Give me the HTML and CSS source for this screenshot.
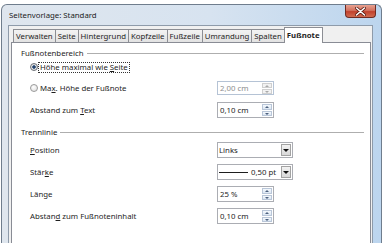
FILE: index.html
```html
<!DOCTYPE html>
<html lang="de">

<head>
    <meta charset="UTF-8">
    <link rel="stylesheet" href="styles.css">
    <title>Seitenvorlage: Standard</title>
</head>

<body>
    <!-- Dialogfenster -->
    <div class="window">
        <div class="titlebar">
            <span class="title">Seitenvorlage: Standard</span>
            <span class="close">
                <svg width="11" height="9" viewBox="0 0 11 9">
                    <path d="M1.5 1 L9.5 8 M9.5 1 L1.5 8" stroke="#5a1a12" stroke-width="3" stroke-linecap="round"/>
                    <path d="M1.5 1 L9.5 8 M9.5 1 L1.5 8" stroke="#fff" stroke-width="1.6" stroke-linecap="round"/>
                </svg>
            </span>
        </div>

        <div class="client">
            <!-- Registerkarten -->
            <div class="tabs">
                <span class="tab">Verwalten</span>
                <span class="tab">Seite</span>
                <span class="tab">Hintergrund</span>
                <span class="tab">Kopfzeile</span>
                <span class="tab">Fußzeile</span>
                <span class="tab">Umrandung</span>
                <span class="tab">Spalten</span>
                <span class="tab active">Fußnote</span>
            </div>

            <div class="panel">
                <div class="group-head"><span>Fußnotenbereich</span></div>

                <div class="row radio-row">
                    <span class="choice"><span class="radio checked"></span><span class="focus">Höhe maximal wie <u>S</u>eite</span></span>
                </div>

                <div class="row radio-row second">
                    <span class="choice"><span class="radio"></span><span class="text">Ma<u>x</u>. Höhe der Fußnote</span></span>
                    <span class="spin disabled">
                        <span>2,00 cm</span>
                        <span class="spin-btn"><i class="up"></i><i class="down"></i></span>
                    </span>
                </div>

                <div class="row">
                    <span>Abstand zum <u>T</u>ext</span>
                    <span class="spin">
                        <span>0,10 cm</span>
                        <span class="spin-btn"><i class="up"></i><i class="down"></i></span>
                    </span>
                </div>

                <div class="group-head second-head"><span>Trennlinie</span></div>

                <div class="row">
                    <span><u>P</u>osition</span>
                    <span class="drop">
                        <span class="drop-text">Links</span>
                        <span class="drop-btn"><i></i></span>
                    </span>
                </div>

                <div class="row">
                    <span>Stär<u>k</u>e</span>
                    <span class="drop">
                        <span class="drop-text line-value"><b class="line"></b>0,50 pt</span>
                        <span class="drop-btn"><i></i></span>
                    </span>
                </div>

                <div class="row">
                    <span>Länge</span>
                    <span class="spin">
                        <span>25 %</span>
                        <span class="spin-btn"><i class="up"></i><i class="down"></i></span>
                    </span>
                </div>

                <div class="row">
                    <span>Abstan<u>d</u> zum Fußnoteninhalt</span>
                    <span class="spin">
                        <span>0,10 cm</span>
                        <span class="spin-btn"><i class="up"></i><i class="down"></i></span>
                    </span>
                </div>
            </div>
        </div>
    </div>
</body>

</html>
```

FILE: styles.css
```css
/* Grundlayout */
body {
    margin: 0;
    background: #fff;
    font-family: "Noto Sans", "DejaVu Sans", sans-serif;
    font-size: 7.8px;
    color: #1e1e1e;
    overflow: hidden;
}

u {
    text-decoration: underline;
    text-underline-offset: 1px;
}

/* Fensterrahmen */
.window {
    margin: 4px 0 0 1px;
    width: 381px;
    height: 250px;
    box-sizing: border-box;
    border: 1px solid #6f7d8d;
    border-bottom: none;
    border-radius: 6px 6px 0 0;
    background: linear-gradient(90deg, #dfe6ee 0%, #d7e3f0 55%, #bcd5ee 100%);
    padding: 0 8px 0 6px;
    display: flex;
    flex-direction: column;
}

.titlebar {
    height: 20px;
    display: flex;
    justify-content: space-between;
    align-items: center;
}

.title {
    padding-left: 1px;
    color: #1b1b1b;
}

.close {
    align-self: flex-start;
    width: 31px;
    height: 13px;
    margin-right: -3px;
    box-sizing: border-box;
    border: 1px solid #6e2a22;
    border-top: none;
    border-radius: 0 0 4px 4px;
    background: linear-gradient(#e7a190 0%, #d2715f 45%, #c1412d 55%, #d06a4f 100%);
    display: flex;
    justify-content: center;
    align-items: center;
}

/* Innenbereich */
.client {
    flex: 1;
    background: #f0f0f0;
    border: 1px solid #8e9baa;
    border-bottom: none;
    padding: 1px 1px 0 2px;
    display: flex;
    flex-direction: column;
}

/* Registerkarten */
.tabs {
    display: flex;
    align-items: flex-end;
    height: 15px;
    margin-left: 2px;
}

.tab {
    height: 13px;
    box-sizing: border-box;
    padding: 0 2px;
    border: 1px solid #8c8e94;
    border-bottom: none;
    margin-left: -1px;
    background: linear-gradient(#f3f3f3, #e2e2e2);
    line-height: 12px;
    white-space: nowrap;
}

.tab:first-child {
    margin-left: 0;
}

.tab.active {
    height: 16px;
    margin-bottom: -1px;
    background: #fff;
    font-weight: bold;
    position: relative;
    z-index: 1;
    line-height: 14px;
}

.panel {
    flex: 1;
    background: #fff;
    border: 1px solid #898c95;
    border-bottom: none;
    padding: 3px 6px 0 9px;
}

/* Gruppenüberschrift mit Linie */
.group-head {
    display: flex;
    align-items: center;
    gap: 3px;
    height: 14px;
}

.group-head::after {
    content: "";
    flex: 1;
    height: 1px;
    background: #aeaeae;
}

.second-head {
    margin-top: 4px;
}

/* Zeilen */
.row {
    display: grid;
    grid-template-columns: 187px auto;
    align-items: center;
    height: 22px;
    padding-left: 9px;
}

.radio-row {
    height: 14px;
}

.radio-row.second {
    height: 22px;
    margin-top: 3px;
}

.choice {
    display: flex;
    align-items: center;
}

.radio {
    width: 8px;
    height: 8px;
    box-sizing: border-box;
    border-radius: 50%;
    border: 1px solid #9a9a9a;
    background: radial-gradient(circle at 40% 35%, #fff 0%, #e6e6e6 70%);
    margin-right: 1px;
}

.radio.checked {
    border-color: #6b6f75;
    background: radial-gradient(circle, #1f3a5e 0%, #2d4f7a 35%, #e8e8e8 45%, #d5d5d5 100%);
}

.focus {
    outline: 1px dotted #333;
    padding: 0 1px;
    line-height: 9px;
}

.text {
    padding-left: 1px;
}

/* Drehfelder */
.spin {
    width: 57px;
    height: 16px;
    box-sizing: border-box;
    border: 1px solid #abadb3;
    background: #fff;
    display: flex;
    justify-content: space-between;
    align-items: center;
    padding: 0 1px 0 2px;
}

.spin.disabled {
    height: 14px;
    border-color: #b5c3d5;
    color: #8e8e8e;
}

.spin-btn {
    width: 10px;
    height: 12px;
    display: flex;
    flex-direction: column;
    gap: 1px;
}

.spin.disabled .spin-btn {
    height: 11px;
}

.spin-btn i {
    flex: 1;
    border: 1px solid #b9c6d8;
    background: linear-gradient(#f4f8fc, #dce7f3);
    position: relative;
}

.spin.disabled .spin-btn i {
    border-color: #cfcfcf;
    background: #f2f2f2;
}

.spin-btn i::after {
    content: "";
    position: absolute;
    left: 2px;
    top: 1px;
    border-left: 2px solid transparent;
    border-right: 2px solid transparent;
}

.spin-btn .up::after {
    border-bottom: 2px solid #4c607e;
}

.spin-btn .down::after {
    border-top: 2px solid #4c607e;
}

.spin.disabled .spin-btn .up::after {
    border-bottom-color: #a9a9a9;
}

.spin.disabled .spin-btn .down::after {
    border-top-color: #a9a9a9;
}

/* Auswahllisten */
.drop {
    width: 76px;
    height: 16px;
    box-sizing: border-box;
    border: 1px solid #abadb3;
    background: #fff;
    display: flex;
    align-items: center;
    padding: 0 1px 0 1px;
}

.drop-text {
    flex: 1;
}

.line-value {
    display: flex;
    align-items: center;
    gap: 3px;
}

.line {
    width: 29px;
    height: 1px;
    background: #1e1e1e;
}

.drop-btn {
    width: 10px;
    height: 12px;
    box-sizing: border-box;
    border: 1px solid #a3a3a3;
    background: linear-gradient(#f2f2f2, #d8d8d8);
    display: flex;
    justify-content: center;
    align-items: center;
}

.drop-btn i {
    border-left: 3px solid transparent;
    border-right: 3px solid transparent;
    border-top: 3px solid #111;
}
```
